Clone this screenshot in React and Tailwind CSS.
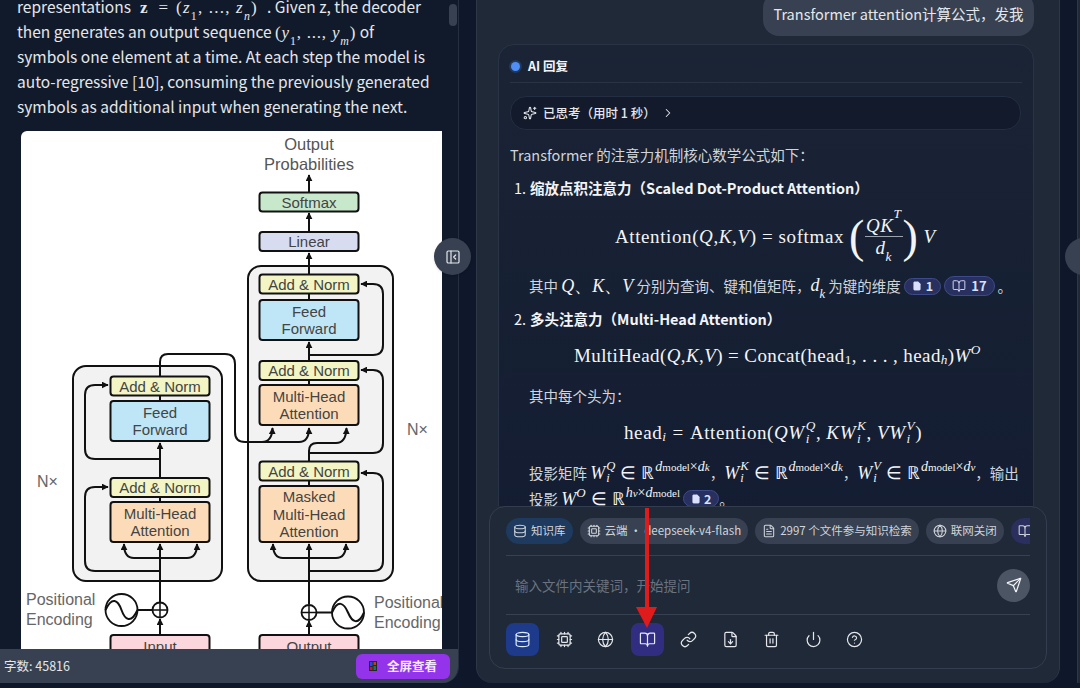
import React from 'react';
import {
  BookOpen, ChevronRight, CircleHelp, Cpu, Database, FileDown, FileText, Globe,
  Link, PanelLeftClose, Power, Send, Sparkles, Trash2,
} from 'lucide-react';

const I = ({ children }) => <span className="italic">{children}</span>;
const Sub = ({ children }) => <sub className="text-[0.7em] leading-none align-[-0.3em]">{children}</sub>;
const Sup = ({ children }) => <sup className="text-[0.7em] leading-none align-[0.5em]">{children}</sup>;
const Comma = () => <span className="mr-[5px]">,</span>;
const Eq = () => <span className="mx-[6px]">=</span>;

// W with both a superscript and a subscript stacked after it
const W = ({ top }) => (
  <span className="inline-flex items-center">
    <I>W</I>
    <span className="ml-[1px] inline-flex flex-col text-[0.7em] leading-[0.95] italic">
      <span>{top}</span>
      <span>i</span>
    </span>
  </span>
);

// exponent of the real-number sets, e.g. d_model x d_k
const Dim = ({ a, b }) => (
  <span className="relative -top-[6px] ml-[1px] text-[14px] leading-none tracking-normal">
    <I>{a}</I>
    <span className="text-[11px]">{a === 'd' ? 'model' : <I>v</I>}</span>×<I>d</I>
    <span className="text-[11px]">{b === 'model' ? 'model' : <I>{b}</I>}</span>
  </span>
);

const Box = ({ x, y, h, fill, lines }) => (
  <g>
    <rect x={x} y={y} width="99" height={h} rx="3" fill={fill} stroke="#111" strokeWidth="2" />
    {lines.map((t, i) => (
      <text
        key={t}
        x={x + 49.5}
        y={y + h / 2 + 5.5 - ((lines.length - 1) * 17.5) / 2 + i * 17.5}
        textAnchor="middle"
        fontSize="15"
        fill="#444"
      >
        {t}
      </text>
    ))}
  </g>
);

function Diagram() {
  return (
    <svg viewBox="21 131 421 518" width="421" height="518" className="block font-['Liberation_Sans',sans-serif]">
      <defs>
        <marker id="head" viewBox="0 0 10 10" refX="9" refY="5" markerWidth="7" markerHeight="7" markerUnits="userSpaceOnUse" orient="auto-start-reverse">
          <path d="M0 0 L10 5 L0 10 Z" fill="#111" />
        </marker>
      </defs>

      <text x="309" y="150" textAnchor="middle" fontSize="16.500" fill="#555">Output</text>
      <text x="309" y="170" textAnchor="middle" fontSize="16.500" fill="#555">Probabilities</text>

      <rect x="73" y="366" width="149" height="215" rx="13" fill="#f2f2f2" stroke="#111" strokeWidth="2" />
      <rect x="248" y="266" width="145" height="315" rx="13" fill="#f2f2f2" stroke="#111" strokeWidth="2" />

      <g fill="none" stroke="#111" strokeWidth="2">
        <path d="M309 192V175" markerEnd="url(#head)" />
        <path d="M309 231V213" markerEnd="url(#head)" />
        <path d="M309 274V253" markerEnd="url(#head)" />
        <path d="M309 293V300M309 380V385M309 480V486" />
        <path d="M309 361V342" markerEnd="url(#head)" />
        <path d="M309 355H373Q383 355 383 345V294Q383 284 373 284H361" markerEnd="url(#head)" />
        <path d="M309 453H373Q383 453 383 443V381Q383 370 373 370H361" markerEnd="url(#head)" />
        <path d="M309 461V451Q309 443 317 443H336Q346 443 346.500 428" markerEnd="url(#head)" />
        <path d="M160 376V362Q160 354 168 354H225Q235 354 235 364V432Q235 442 245 442H262Q272 442 272.500 428" markerEnd="url(#head)" />
        <path d="M262 442H299Q309 442 309 428" markerEnd="url(#head)" />
        <path d="M309 604V544" markerEnd="url(#head)" />
        <path d="M273 544Q273 558 283 558H336Q346 558 346 544" markerStart="url(#head)" markerEnd="url(#head)" />
        <path d="M309 571H373Q383 571 383 561V483Q383 473 373 473H361" markerEnd="url(#head)" />
        <path d="M309 635V621" markerEnd="url(#head)" />
        <path d="M160 603V544" markerEnd="url(#head)" />
        <path d="M124 544Q124 558 134 558H187Q197 558 197 544" markerStart="url(#head)" markerEnd="url(#head)" />
        <path d="M160 571H95Q85 571 85 561V497Q85 487 95 487H108" markerEnd="url(#head)" />
        <path d="M160 478V443" markerEnd="url(#head)" />
        <path d="M160 459H95Q85 459 85 449V395Q85 385 95 385H108" markerEnd="url(#head)" />
        <path d="M160 395V401M160 497V502" />
        <path d="M160 635V619" markerEnd="url(#head)" />
        <path d="M137 610H153M316 612.500H332" />
      </g>

      <Box x={259.500} y={192.500} h={19} fill="#c8e8cc" lines={['Softmax']} />
      <Box x={259.500} y={232} h={19} fill="#d8dcf1" lines={['Linear']} />
      <Box x={259.500} y={274.500} h={19} fill="#f3f6c4" lines={['Add & Norm']} />
      <Box x={259.500} y={300} h={40} fill="#bfe6f7" lines={['Feed', 'Forward']} />
      <Box x={259.500} y={361} h={19} fill="#f3f6c4" lines={['Add & Norm']} />
      <Box x={259.500} y={385} h={40} fill="#fcdcb8" lines={['Multi-Head', 'Attention']} />
      <Box x={259.500} y={461.500} h={19} fill="#f3f6c4" lines={['Add & Norm']} />
      <Box x={259.500} y={486} h={56} fill="#fcdcb8" lines={['Masked', 'Multi-Head', 'Attention']} />
      <Box x={110.500} y={376.500} h={19} fill="#f3f6c4" lines={['Add & Norm']} />
      <Box x={110.500} y={401} h={40} fill="#bfe6f7" lines={['Feed', 'Forward']} />
      <Box x={110.500} y={478} h={19} fill="#f3f6c4" lines={['Add & Norm']} />
      <Box x={110.500} y={502} h={40} fill="#fcdcb8" lines={['Multi-Head', 'Attention']} />
      <Box x={110.500} y={635} h={30} fill="#fbd6dc" lines={[]} />
      <Box x={259.500} y={635} h={30} fill="#fbd6dc" lines={[]} />
      <text x="160" y="652" textAnchor="middle" fontSize="15" fill="#444">Input</text>
      <text x="309" y="652" textAnchor="middle" fontSize="15" fill="#444">Output</text>

      <g fill="#fff" stroke="#111" strokeWidth="1.800">
        <circle cx="160" cy="610" r="7.500" />
        <circle cx="309" cy="612.500" r="7.500" />
        <circle cx="121.500" cy="610" r="16" />
        <circle cx="348" cy="612.500" r="16" />
      </g>
      <g fill="none" stroke="#111" strokeWidth="1.500">
        <path d="M152.500 610H167.500M160 602.500V617.500M301.500 612.500H316.500M309 605V620" />
        <path d="M105.500 610C112 596 118 600 121.500 610C125 620 131 624 137.500 610" strokeWidth="2" />
        <path d="M332 612.500C338 599 344 603 348 612.500C352 622 358 626 364 612.500" strokeWidth="2" />
      </g>

      <g fontSize="16" fill="#666">
        <text x="26" y="605">Positional</text>
        <text x="26" y="625">Encoding</text>
        <text x="374" y="608">Positional</text>
        <text x="374" y="628">Encoding</text>
        <text x="37" y="487">N×</text>
        <text x="407" y="435">N×</text>
      </g>
    </svg>
  );
}

function DocPanel() {
  return (
    <div className="relative flex h-[683px] w-[459px] shrink-0 flex-col overflow-hidden rounded-br-2xl border-r border-[#252f40] bg-[#111a2a]">
      <div className="min-h-0 flex-1 overflow-hidden pl-[17px]">
        <div className="-mt-[6px] w-[425px] text-[15.500px] leading-[25px] text-[#e5e7eb]">
          <p className="h-[25px] whitespace-nowrap">
            representations
            <span className="ml-[9px] font-['Liberation_Serif',serif] text-[17px] font-bold">z</span>
            <span className="ml-[11px] font-['Liberation_Serif',serif] text-[17px]">=</span>
            <span className="ml-[8px] font-['Liberation_Serif',serif] text-[17px] tracking-[1.2px]">(<I>z</I><Sub>1</Sub>, ..., <I>z</I><Sub><I>n</I></Sub>)</span>
            <span className="ml-[9px]">. Given z, the decoder</span>
          </p>
          <p className="h-[25px] whitespace-nowrap">
            then generates an output sequence <span className="font-['Liberation_Serif',serif] text-[17px] tracking-[0.8px]">(<I>y</I><Sub>1</Sub>, ..., <I>y</I><Sub><I>m</I></Sub>)</span> of
          </p>
          <p className="h-[25px] whitespace-nowrap">symbols one element at a time. At each step the model is</p>
          <p className="h-[25px] whitespace-nowrap">auto-regressive [10], consuming the previously generated</p>
          <p className="h-[25px] whitespace-nowrap">symbols as additional input when generating the next.</p>
        </div>
        <div className="mt-[12px] ml-[4px] h-[518px] w-[421px] overflow-hidden rounded-tl-md bg-white">
          <Diagram />
        </div>
      </div>
      <div className="flex h-[34px] shrink-0 items-center justify-between bg-[#374151] pr-[8px] pl-[4px]">
        <span className="text-[12.500px] text-[#e5e7eb]">字数: 45816</span>
        <button className="flex h-[25px] w-[94px] items-center justify-center gap-[10px] rounded-md bg-[#9333ea] text-[12.500px] font-bold text-[#f3e8ff]">
          <svg width="8" height="10" viewBox="0 0 8 10">
            <rect width="8" height="10" fill="#27272a" />
            <rect x="1" y="1" width="2.500" height="4" fill="#1d4ed8" />
            <rect x="4.500" y="1" width="2.500" height="3" fill="#c2410c" />
            <rect x="1" y="6" width="2.500" height="3" fill="#b91c1c" />
            <rect x="4.500" y="5" width="2.500" height="4" fill="#0f766e" />
          </svg>
          全屏查看
        </button>
      </div>
      <div className="absolute top-[4px] right-[1px] h-[22px] w-[8px] rounded-full bg-[#374151]" />
    </div>
  );
}

function Chip({ icon: Icon, children, cls }) {
  return (
    <div className={`flex h-[26px] shrink-0 items-center gap-[4px] rounded-full px-[7px] text-[11.500px] whitespace-nowrap text-[#d1d5db] ${cls}`}>
      <Icon className="h-[14px] w-[14px]" strokeWidth={1.8} />
      {children}
    </div>
  );
}

function Message() {
  return (
    <div className="min-h-0 flex-1 overflow-hidden pr-[25px] pl-[21px]">
      <div className="-mt-[8px] ml-auto w-[271px] rounded-2xl bg-[#374151] py-[12px] text-center text-[14.500px] leading-[20px] text-[#e5e7eb]">
        Transformer attention计算公式，发我
      </div>
      <div className="mt-[8px] rounded-2xl border border-[#283446] bg-gradient-to-b from-[#1a2435] to-[#131c31] px-[11px] pb-[40px] text-[14.500px] leading-[22px] text-[#d1d5db]">
        <div className="flex h-[38px] items-center gap-[8px] border-b border-[#283446] pt-[5px] pl-[1px] text-[12.500px] font-bold text-[#f3f4f6]">
          <span className="h-[9px] w-[9px] rounded-full bg-[#4f8ff7] ring-2 ring-[#1e3a5f]" />
          AI 回复
        </div>
        <div className="mt-[13px] mr-[1px] flex h-[34px] items-center rounded-2xl border border-[#232e42] bg-[#121a2c] pl-[12px] text-[12.500px] font-medium text-[#e5e7eb]">
          <Sparkles className="mr-[6px] h-[14px] w-[14px]" strokeWidth={1.8} />
          已思考（用时 1 秒）
          <ChevronRight className="ml-[5px] h-[14px] w-[14px]" strokeWidth={1.8} />
        </div>
        <p className="mt-[14px]">Transformer 的注意力机制核心数学公式如下：</p>
        <p className="mt-[11px] pl-[4px] font-bold text-[#f3f4f6]">
          <span className="mr-[4px] font-normal">1.</span>缩放点积注意力（Scaled Dot-Product Attention）
        </p>

        <div className="mt-[9px] flex h-[58px] items-center pl-[105px] font-['Liberation_Serif',serif] text-[19px] tracking-[0.6px] whitespace-nowrap text-[#f3f4f6]">
          Attention(<I>Q</I>, <I>K</I>, <I>V</I>) = softmax
          <span className="ml-[5px] text-[46px] leading-none font-light">(</span>
          <span className="inline-flex flex-col items-center leading-[21px]">
            <span className="border-b border-[#9ca3af] px-[1px] pb-[1px]"><I>QK</I><Sup><I>T</I></Sup></span>
            <span><I>d</I><Sub><I>k</I></Sub></span>
          </span>
          <span className="mr-[5px] text-[46px] leading-none font-light">)</span>
          <I>V</I>
        </div>

        <p className="mt-[8px] flex h-[24px] items-center pl-[19px] whitespace-nowrap">
          其中&nbsp;
          <span className="font-['Liberation_Serif',serif] text-[18px] text-[#f3f4f6]"><I>Q</I>、<I>K</I>、<I>V</I></span>
          &nbsp;分别为查询、键和值矩阵，
          <span className="font-['Liberation_Serif',serif] text-[18px] text-[#f3f4f6]"><I>d</I><Sub><I>k</I></Sub></span>
          &nbsp;为键的维度
          <span className="ml-[3px] inline-flex h-[17px] items-center gap-[4px] rounded-full border border-[#3f4a8a] bg-[#27305e] px-[7px] text-[12.500px] font-bold text-[#dbe0ff]">
            <FileText className="h-[10px] w-[10px]" fill="currentColor" strokeWidth={1} />1
          </span>
          <span className="mx-[3px] inline-flex h-[20px] items-center gap-[5px] rounded-full border border-[#3f4a8a] bg-[#27305e] px-[7px] text-[13px] font-bold text-[#dbe0ff]">
            <BookOpen className="h-[14px] w-[14px]" strokeWidth={1.6} />17
          </span>
          。
        </p>

        <p className="mt-[10px] pl-[4px] font-bold text-[#f3f4f6]">
          <span className="mr-[4px] font-normal">2.</span>多头注意力（Multi-Head Attention）
        </p>

        <div className="mt-[6px] flex h-[40px] items-center pl-[64px] font-['Liberation_Serif',serif] text-[19px] tracking-[0.4px] whitespace-nowrap text-[#f3f4f6]">
          MultiHead(<I>Q</I>, <I>K</I>, <I>V</I>) = Concat(head<Sub>1</Sub>, . . . , head<Sub><I>h</I></Sub>)<I>W</I><Sup><I>O</I></Sup>
        </div>

        <p className="mt-[9px] pl-[19px]">其中每个头为：</p>

        <div className="mt-[8px] flex h-[36px] items-center pl-[114px] font-['Liberation_Serif',serif] text-[19px] tracking-[0.6px] whitespace-nowrap text-[#f3f4f6]">
          head<Sub><I>i</I></Sub><Eq />Attention(<I>Q</I><W top="Q" /><Comma /><I>K</I><W top="K" /><Comma /><I>V</I><W top="V" />)
        </div>

        <div className="mt-[9px] flex h-[26px] items-center pl-[19px] whitespace-nowrap">
          投影矩阵&nbsp;
          <span className="inline-flex items-center font-['Liberation_Serif',serif] text-[18px] text-[#f3f4f6]">
            <W top="Q" /><span className="mx-[5px]">∈</span>ℝ<Dim a="d" b="k" />
          </span>
          ，
          <span className="inline-flex items-center font-['Liberation_Serif',serif] text-[18px] text-[#f3f4f6]">
            <W top="K" /><span className="mx-[5px]">∈</span>ℝ<Dim a="d" b="k" />
          </span>
          ，
          <span className="inline-flex items-center font-['Liberation_Serif',serif] text-[18px] text-[#f3f4f6]">
            <W top="V" /><span className="mx-[5px]">∈</span>ℝ<Dim a="d" b="v" />
          </span>
          ，输出
        </div>
        <div className="flex h-[25px] items-center pl-[19px] whitespace-nowrap">
          投影&nbsp;
          <span className="inline-flex items-center font-['Liberation_Serif',serif] text-[18px] text-[#f3f4f6]">
            <I>W</I><span className="relative -top-[6px] text-[13px] leading-none italic">O</span><span className="mx-[5px]">∈</span>ℝ<Dim a="h" b="model" />
          </span>
          <span className="ml-[3px] inline-flex h-[17px] items-center gap-[3px] rounded-full border border-[#3f4a8a] bg-[#27305e] px-[7px] text-[12.500px] font-bold text-[#dbe0ff]">
            <FileText className="h-[10px] w-[10px]" fill="currentColor" strokeWidth={1} />2
          </span>
          。
        </div>
      </div>
    </div>
  );
}

function Composer() {
  const tools = [
    { icon: Database, cls: 'bg-[#1e3a8a] text-[#dbeafe]' },
    { icon: Cpu, cls: 'text-[#e5e7eb]' },
    { icon: Globe, cls: 'text-[#e5e7eb]' },
    { icon: BookOpen, cls: 'bg-[#312e81] text-[#e0e7ff]' },
    { icon: Link, cls: 'text-[#e5e7eb]' },
    { icon: FileDown, cls: 'text-[#e5e7eb]' },
    { icon: Trash2, cls: 'text-[#e5e7eb]' },
    { icon: Power, cls: 'text-[#e5e7eb]' },
    { icon: CircleHelp, cls: 'text-[#e5e7eb]' },
  ];
  return (
    <div className="relative mx-[12px] mb-[14px] h-[163px] shrink-0 rounded-2xl border border-[#323d4f] bg-[#1f2937] px-[16px]">
      <div className="flex h-[49px] items-center gap-[7px] overflow-hidden border-b border-[#374151] pb-[1px]">
        <Chip icon={Database} cls="bg-[#1e3a5f]">知识库</Chip>
        <Chip icon={Cpu} cls="bg-[#374151]">云端 · deepseek-v4-flash</Chip>
        <Chip icon={FileText} cls="bg-[#374151]">2997 个文件参与知识检索</Chip>
        <Chip icon={Globe} cls="bg-[#374151]">联网关闭</Chip>
        <Chip icon={BookOpen} cls="bg-[#2a2f5e]">知识增强</Chip>
      </div>
      <div className="flex h-[59px] items-center justify-between border-b border-[#374151] pl-[9px]">
        <span className="text-[13.500px] text-[#6b7280]">输入文件内关键词，开始提问</span>
        <button className="flex h-[33px] w-[33px] items-center justify-center rounded-full bg-[#4b5563] text-[#f3f4f6]">
          <Send className="h-[16px] w-[16px]" strokeWidth={1.8} />
        </button>
      </div>
      <div className="mt-[8px] flex gap-[8.500px]">
        {tools.map(({ icon: Icon, cls }, i) => (
          <button key={i} className={`flex h-[33px] w-[33px] items-center justify-center rounded-lg ${cls}`}>
            <Icon className="h-[17px] w-[17px]" strokeWidth={1.7} />
          </button>
        ))}
      </div>
    </div>
  );
}

export default function App() {
  return (
    <div className="relative flex h-[688px] w-[1080px] overflow-hidden bg-[#0f172a] font-['Noto_Sans_CJK_SC',sans-serif]">
      <DocPanel />
      <div className="ml-[17px] flex h-[683px] w-[584px] shrink-0 flex-col rounded-b-2xl border-x border-[#2c3748] bg-[#1f2937]">
        <Message />
        <Composer />
      </div>
      <div className="ml-[17px] h-[683px] flex-1 border-l border-[#2c3748] bg-[#1f2937]" />

      <button className="absolute top-[238px] left-[434px] flex h-[37px] w-[37px] items-center justify-center rounded-full bg-[#374151] text-[#e5e7eb] shadow">
        <PanelLeftClose className="h-[16px] w-[16px]" strokeWidth={1.8} />
      </button>
      <div className="absolute top-[238px] left-[1065px] h-[37px] w-[37px] rounded-full bg-[#374151]" />

      {/* red annotation arrow */}
      <svg className="absolute top-[508px] left-[636px]" width="22" height="122" viewBox="0 0 22 122">
        <path d="M11 0V100" stroke="#e01b1b" strokeWidth="4" />
        <path d="M0 99H21L11 120Z" fill="#e01b1b" />
      </svg>
    </div>
  );
}
